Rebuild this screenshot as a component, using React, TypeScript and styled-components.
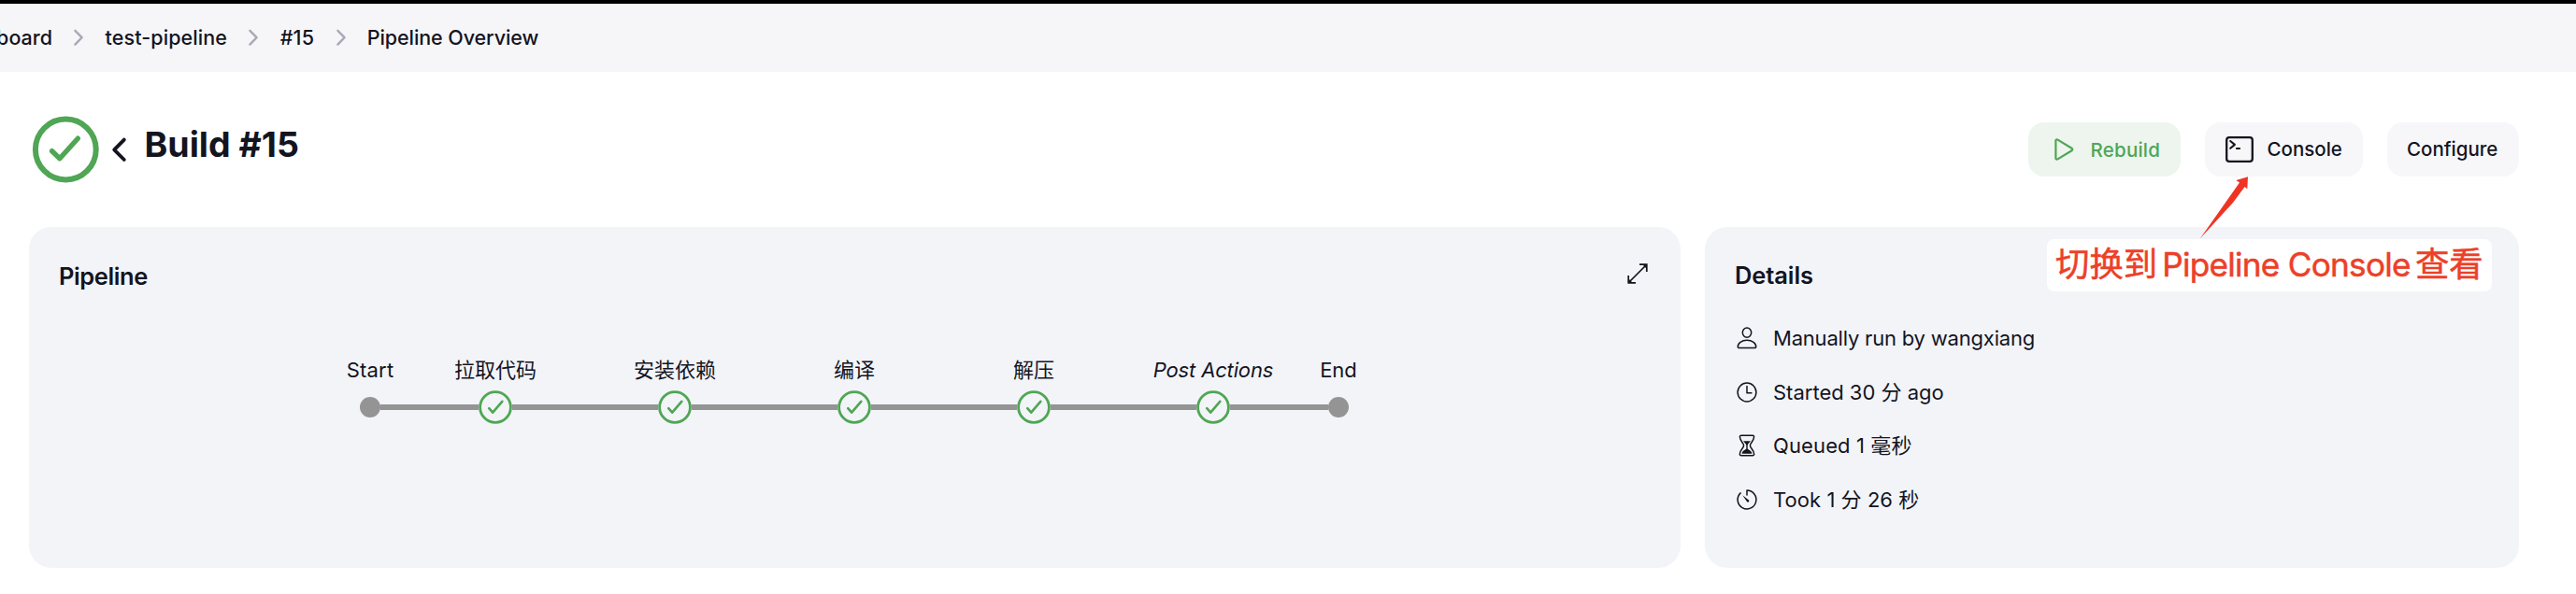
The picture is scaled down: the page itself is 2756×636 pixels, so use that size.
import React from "react";
import styled, { createGlobalStyle } from "styled-components";

const ink = "#14141f";
const green = "#4fa654";
const grey = "#949494";

const Global = createGlobalStyle`
  * { box-sizing: border-box; }
  body {
    margin: 0;
    background: #fff;
    color: ${ink};
    font-family: Inter, "Noto Sans CJK SC", sans-serif;
    font-size: 22px;
  }
  svg { display: block; flex: none; overflow: visible; }
`;

const Page = styled.div`
  position: relative;
  width: 2756px;
  height: 636px;
  overflow: hidden;
  background: #fff;
`;

const Breadcrumbs = styled.nav`
  display: flex;
  align-items: center;
  gap: 23.3px;
  height: 77px;
  padding-bottom: 1px;
  border-top: 4px solid #000;
  background: #f6f6f9;
`;

const Crumb = styled.span<{ $spacing?: number }>`
  font-size: 21.5px;
  font-weight: 500;
  line-height: 30px;
  white-space: nowrap;
  letter-spacing: ${(p) => p.$spacing ?? 0}px;
`;

const CrumbClip = styled.div`
  display: flex;
  justify-content: flex-end;
  width: 56px;
  overflow: hidden;
`;

const Header = styled.header`
  display: flex;
  align-items: center;
  height: 166px;
  padding: 0 61px 0 34px;
`;

const Title = styled.h1`
  margin: 0 auto 0 19.5px;
  padding-bottom: 10px;
  font-size: 37.5px;
  font-weight: 700;
  line-height: 44px;
`;

const BackIcon = styled.svg`
  margin-left: 14px;
`;

const Actions = styled.div`
  display: flex;
  gap: 26px;
`;

const Button = styled.button<{ $width: number; $primary?: boolean }>`
  display: flex;
  align-items: center;
  width: ${(p) => p.$width}px;
  height: 58px;
  padding: 0 0 0 22px;
  border: 0;
  border-radius: 17px;
  background: ${(p) => (p.$primary ? "#edf5ee" : "#f7f7fa")};
  color: ${(p) => (p.$primary ? green : ink)};
  font: 500 20.5px/30px Inter, sans-serif;
  white-space: nowrap;
`;

const ButtonText = styled.span<{ $left?: number; $down?: number; $spacing?: number }>`
  margin-left: ${(p) => p.$left ?? 0}px;
  padding-top: ${(p) => p.$down ?? 0}px;
  letter-spacing: ${(p) => p.$spacing ?? 0}px;
`;

const Cards = styled.main`
  display: flex;
  gap: 26px;
  padding: 0 61px 0 31px;
`;

const Card = styled.section<{ $width: number; $top: number }>`
  width: ${(p) => p.$width}px;
  height: 365px;
  padding: ${(p) => p.$top}px 33px 0 32px;
  border-radius: 24px;
  background: #f2f4f8;
`;

const CardHead = styled.div`
  display: flex;
  justify-content: space-between;
  height: 36px;
`;

const CardTitle = styled.h2<{ $spacing: number }>`
  margin: 0;
  font-size: 25.5px;
  font-weight: 600;
  line-height: 34px;
  letter-spacing: ${(p) => p.$spacing}px;
`;

const ExpandIcon = styled.svg`
  margin: 3px 2px 0 0;
`;

const Graph = styled.div`
  display: flex;
  justify-content: center;
  margin-top: 64px;
`;

const Stage = styled.div<{ $width: number }>`
  display: flex;
  flex-direction: column;
  align-items: center;
  width: ${(p) => p.$width}px;
`;

const StageLabel = styled.span<{ $italic?: boolean; $spacing?: number }>`
  height: 39px;
  font-size: 22px;
  line-height: 34px;
  white-space: nowrap;
  font-style: ${(p) => (p.$italic ? "italic" : "normal")};
  letter-spacing: ${(p) => p.$spacing ?? 0}px;
`;

const Track = styled.div`
  display: flex;
  align-items: center;
  align-self: stretch;
  height: 36px;
`;

const Line = styled.i<{ $hidden?: boolean }>`
  flex: 1;
  height: 6px;
  background: ${(p) => (p.$hidden ? "transparent" : grey)};
`;

const Dot = styled.i`
  width: 22px;
  height: 22px;
  border-radius: 50%;
  background: ${grey};
`;

const DetailList = styled.ul`
  display: flex;
  flex-direction: column;
  margin: 21px 0 0 1px;
  padding: 0;
  list-style: none;
`;

const Detail = styled.li`
  display: flex;
  align-items: center;
  gap: 16px;
  height: 57.8px;
`;

const DetailText = styled.span<{ $spacing: number }>`
  font-size: 22px;
  line-height: 32px;
  white-space: nowrap;
  letter-spacing: ${(p) => p.$spacing}px;
`;

const Note = styled.div`
  position: absolute;
  left: 2190px;
  top: 256px;
  display: flex;
  align-items: center;
  width: 476px;
  height: 56px;
  padding: 0 0 2px 9px;
  border-radius: 8px;
  background: #fff;
  color: #ec4029;
  line-height: 50px;
  white-space: nowrap;
  -webkit-text-stroke: 0.5px #ec4029;
`;

const NoteText = styled.span<{ $size: number; $width: number; $spacing?: number }>`
  width: ${(p) => p.$width}px;
  font-size: ${(p) => p.$size}px;
  letter-spacing: ${(p) => p.$spacing ?? 0}px;
`;

const Arrow = styled.svg`
  position: absolute;
  left: 2352px;
  top: 188px;
`;

const Separator = () => (
  <svg width="10" height="18" viewBox="0 0 10 18" fill="none" stroke="#a9a9b8" strokeWidth="2.4" strokeLinecap="round" strokeLinejoin="round">
    <path d="M1.4 1.8 8.6 9.2 1.4 16.6" />
  </svg>
);

const StageIcon = () => (
  <svg width="36" height="36" viewBox="0 0 36 36" fill="none" stroke={green} strokeLinecap="round" strokeLinejoin="round">
    <circle cx="18" cy="18" r="16.4" strokeWidth="2.8" />
    <path d="M11.2 19.2 15.2 23.7 25.3 11.8" strokeWidth="2.6" />
  </svg>
);

const stages = [
  { name: "拉取代码" },
  { name: "安装依赖" },
  { name: "编译" },
  { name: "解压" },
  { name: "Post Actions", italic: true, spacing: -0.15 },
];

const thin = {
  width: 24,
  height: 24,
  viewBox: "0 0 24 24",
  fill: "none",
  stroke: ink,
  strokeWidth: 1.5,
  strokeLinecap: "round",
  strokeLinejoin: "round",
} as const;

const details = [
  {
    text: "Manually run by wangxiang",
    spacing: -0.2,
    icon: (
      <svg {...thin}>
        <ellipse cx="12" cy="6.1" rx="4.7" ry="5.1" />
        <path d="M2.3 21.7c-.4-4.4 4.4-7.4 9.7-7.4s10.1 3 9.7 7.4c-.05.5-.4.8-.9.8H3.2c-.5 0-.85-.3-.9-.8Z" />
      </svg>
    ),
  },
  {
    text: "Started 30 分 ago",
    spacing: 0,
    icon: (
      <svg {...thin}>
        <circle cx="12" cy="12" r="9.9" />
        <path d="M12 5.5v7.3h4.9" />
      </svg>
    ),
  },
  {
    text: "Queued 1 毫秒",
    spacing: 0.12,
    icon: (
      <svg {...thin}>
        <path d="M5.8 1.2h12.4c.9 0 1.5.7 1.4 1.6-.4 5.2-4.2 6.3-4.2 9.2s3.8 4 4.2 9.2c.1.9-.5 1.6-1.4 1.6H5.8c-.9 0-1.5-.7-1.4-1.6.4-5.2 4.2-6.3 4.2-9.2S4.8 8 4.4 2.8c-.1-.9.5-1.6 1.4-1.6Z" />
        <path d="M8 7.3h8c-1.5 2-3.3 2.8-3.3 4.7v3.3c0 1.2 3.8 2 4.6 4.7.1.4-.1.7-.5.7H7.2c-.4 0-.6-.3-.5-.7.8-2.7 4.6-3.5 4.6-4.7V12c0-1.9-1.8-2.7-3.3-4.7Z" fill={ink} stroke="none" />
      </svg>
    ),
  },
  {
    text: "Took 1 分 26 秒",
    spacing: 0.05,
    icon: (
      <svg {...thin}>
        <path d="M5.1 4.9a9.9 9.9 0 1 0 6.9-2.8v4.8" />
        <path d="m7.3 7.3 6 4.6a1.4 1.4 0 1 1-1.7 1.7Z" fill={ink} stroke="none" />
      </svg>
    ),
  },
];

export default function App() {
  return (
    <Page>
      <Global />
      <Breadcrumbs>
        <CrumbClip>
          <Crumb>board</Crumb>
        </CrumbClip>
        <Separator />
        <Crumb $spacing={0.1}>test-pipeline</Crumb>
        <Separator />
        <Crumb $spacing={0.2}>#15</Crumb>
        <Separator />
        <Crumb $spacing={-0.09}>Pipeline Overview</Crumb>
      </Breadcrumbs>

      <Header>
        <svg width="72" height="72" viewBox="0 0 72 72" fill="none" stroke={green} strokeLinecap="round" strokeLinejoin="round">
          <circle cx="36.3" cy="36" r="32.4" strokeWidth="6" />
          <path d="M21.6 37.7 29.9 45.7 49.3 24.2" strokeWidth="5.4" />
        </svg>
        <BackIcon width="15" height="26" viewBox="0 0 15 26" fill="none" stroke={ink} strokeWidth="3.8" strokeLinecap="round" strokeLinejoin="round">
          <path d="M12.8 2.6 2.2 13.3 12.8 24" />
        </BackIcon>
        <Title>Build #15</Title>
        <Actions>
          <Button $width={163} $primary>
            <svg width="32" height="28" viewBox="0 0 32 28" fill="none" stroke={green} strokeWidth="2.2" strokeLinejoin="round">
              <path d="M7.4 4.6v18.8c0 1.2 1.1 1.6 2.1 1l15-9.2c1-.6 1-1.8 0-2.4l-15-9.2c-1-.6-2.1-.2-2.1 1Z" />
            </svg>
            <ButtonText $left={12.6} $down={2} $spacing={0.2}>Rebuild</ButtonText>
          </Button>
          <Button $width={169}>
            <svg width="30" height="28" viewBox="0 0 30 28" fill="none" stroke={ink} strokeWidth="2.3" strokeLinecap="round" strokeLinejoin="round">
              <rect x="1.2" y="1.2" width="27.6" height="25.6" rx="2.8" />
              <path d="m5.2 5 4.7 3.900-4.700 3.900M11.900 13h3.200" strokeWidth="2.1" />
            </svg>
            <ButtonText $left={14.5}>Console</ButtonText>
          </Button>
          <Button $width={141}>
            <ButtonText $left={-1}>Configure</ButtonText>
          </Button>
        </Actions>
      </Header>

      <Cards>
        <Card $width={1767} $top={36}>
          <CardHead>
            <CardTitle $spacing={-0.4}>Pipeline</CardTitle>
            <ExpandIcon width="22" height="22" viewBox="0 0 22 22" fill="none" stroke={ink} strokeWidth="1.7">
              <path d="M13 1.2h7.8V9M20.5 1.5l-19 19M1.2 13v7.8H9" />
              <path d="M16 1h5v5ZM1 16v5h5Z" fill={ink} stroke="none" />
            </ExpandIcon>
          </CardHead>
          <Graph>
            <Stage $width={76}>
              <StageLabel $spacing={0.2}>Start</StageLabel>
              <Track>
                <Line $hidden />
                <Dot />
                <Line />
              </Track>
            </Stage>
            {stages.map((stage) => (
              <Stage key={stage.name} $width={192}>
                <StageLabel $italic={stage.italic} $spacing={stage.spacing}>{stage.name}</StageLabel>
                <Track>
                  <Line />
                  <StageIcon />
                  <Line />
                </Track>
              </Stage>
            ))}
            <Stage $width={76}>
              <StageLabel>End</StageLabel>
              <Track>
                <Line />
                <Dot />
                <Line $hidden />
              </Track>
            </Stage>
          </Graph>
        </Card>

        <Card $width={871} $top={35}>
          <CardTitle $spacing={-0.1}>Details</CardTitle>
          <DetailList>
            {details.map((item) => (
              <Detail key={item.text}>
                {item.icon}
                <DetailText $spacing={item.spacing}>{item.text}</DetailText>
              </Detail>
            ))}
          </DetailList>
        </Card>
      </Cards>

      <Note>
        <NoteText $size={36.4} $width={114.2}>切换到</NoteText>
        <NoteText $size={35.2} $width={270.8} $spacing={-0.75}>Pipeline Console</NoteText>
        <NoteText $size={36.4} $width={76}>查看</NoteText>
      </Note>
      <Arrow width="56" height="70" viewBox="0 0 56 70" fill="#ee3524">
        <path d="M1.8 67.6 44 7.6 40.3 5 53 1.3 52.3 14.3 49.6 12 37 29Z" />
      </Arrow>
    </Page>
  );
}
